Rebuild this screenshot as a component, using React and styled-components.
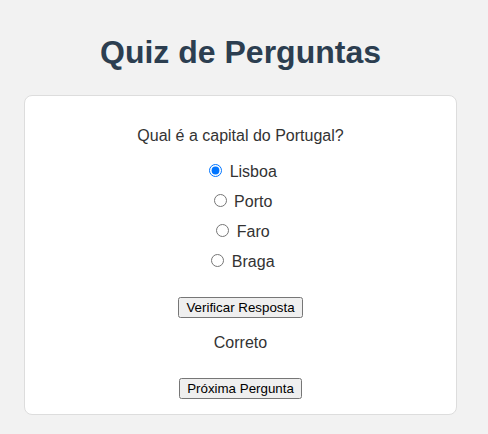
import { useState } from "react";
import styled, { createGlobalStyle } from "styled-components";

const GlobalStyle = createGlobalStyle`
  body {
    margin: 0;
    background: #f2f2f2;
    font-family: "Liberation Sans", Arial, sans-serif;
  }
`;

const Page = styled.div`
  width: 481px;
  padding: 34px 24px 20px;
  box-sizing: border-box;
  display: flex;
  flex-direction: column;
  align-items: stretch;
`;

const Title = styled.h1`
  margin: 0 0 24px;
  font-size: 32px;
  font-weight: bold;
  color: #2c3e50;
  text-align: center;
`;

const Card = styled.div`
  background: #fff;
  border: 1px solid #ddd;
  border-radius: 8px;
  padding: 31px 20px 15px;
  display: flex;
  flex-direction: column;
  align-items: center;
`;

const Question = styled.p`
  margin: 0 0 16px;
  font-size: 16px;
  color: #333;
`;

const Options = styled.div`
  display: flex;
  flex-direction: column;
  align-items: center;
  gap: 10px;
  margin-bottom: 26px;
`;

const Option = styled.label`
  display: block;
  font-size: 16px;
  color: #333;

  input {
    margin: 3px 3px 0 5px;
  }
`;

const Button = styled.button`
  font-family: "Liberation Sans", Arial, sans-serif;
  font-size: 13.33px;
  padding: 1px 6px;
`;

const Feedback = styled.p`
  margin: 16px 0 26px;
  font-size: 16px;
  color: #333;
`;

const options = ["Lisboa", "Porto", "Faro", "Braga"];

export default function App() {
  const [answer, setAnswer] = useState("Lisboa");

  return (
    <>
      <GlobalStyle />
      <Page>
        <Title>Quiz de Perguntas</Title>
        <Card>
          <Question>Qual é a capital do Portugal?</Question>
          <Options>
            {options.map((opt) => (
              <Option key={opt}>
                <input
                  type="radio"
                  name="answer"
                  checked={answer === opt}
                  onChange={() => setAnswer(opt)}
                />{" "}
                {opt}
              </Option>
            ))}
          </Options>
          <Button>Verificar Resposta</Button>
          <Feedback>Correto</Feedback>
          <Button>Próxima Pergunta</Button>
        </Card>
      </Page>
    </>
  );
}
